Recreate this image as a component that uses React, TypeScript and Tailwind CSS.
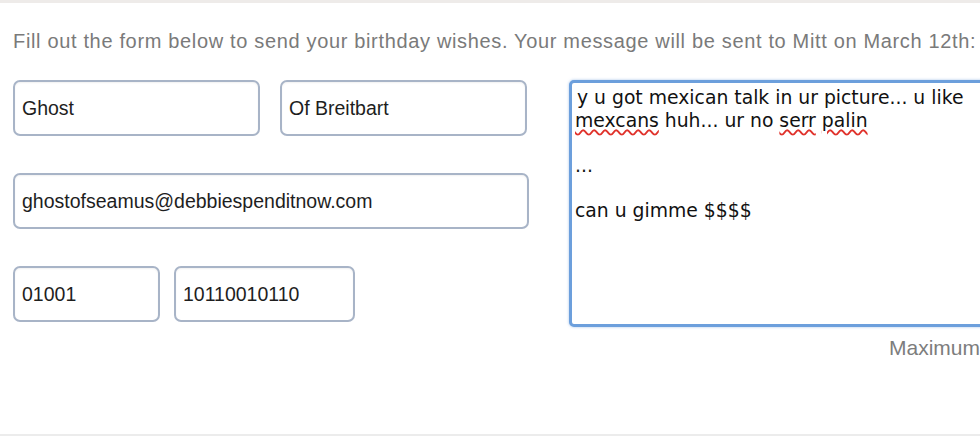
const field =
  'h-[56px] rounded-[7px] border-2 border-[#a8b4c7] bg-white px-[7px] text-[19.5px] text-[#1e1e1e] outline-none shadow-[inset_0_1px_2px_rgba(0,0,0,0.06)]';

function Misspelled({ children }: { children: string }) {
  return (
    <span className="underline decoration-wavy decoration-[#e0322b] decoration-[1.5px] underline-offset-[2px]">
      {children}
    </span>
  );
}

export default function App() {
  return (
    <div
      className="relative flex h-[438px] w-[980px] flex-col overflow-hidden bg-white"
      style={{ fontFamily: '"Liberation Sans", Arial, sans-serif' }}
    >
      <div className="h-[3px] w-full bg-[#eeebe9]" />

      <p className="ml-[13px] mt-[27px] w-[965px] whitespace-nowrap text-[20px] leading-[22px] tracking-[0.66px] text-[#7a7a7a]">
        Fill out the form below to send your birthday wishes. Your message will be sent to Mitt on March 12th:
      </p>

      <div className="mt-[28px] flex">
        {/* Left column */}
        <div className="ml-[13px] flex w-[516px] flex-col gap-[37px]">
          <div className="flex gap-[20px]">
            <input readOnly defaultValue="Ghost" className={`${field} w-[247px]`} />
            <input readOnly defaultValue="Of Breitbart" className={`${field} w-[247px]`} />
          </div>
          <input
            readOnly
            defaultValue="ghostofseamus@debbiespenditnow.com"
            className={`${field} w-[516px]`}
          />
          <div className="flex gap-[14px]">
            <input readOnly defaultValue="01001" className={`${field} w-[147px]`} />
            <input readOnly defaultValue="10110010110" className={`${field} w-[181px]`} />
          </div>
        </div>

        {/* Message */}
        <div className="ml-[40px] flex shrink-0 flex-col">
          <div
            className="h-[247px] w-[440px] rounded-[5px] border-[3px] border-[#6c9fdc] bg-white px-[3px] pt-[4px] text-[18.8px] leading-[22.6px] text-[#111] shadow-[0_0_3px_rgba(108,159,220,0.6)]"
            style={{ fontFamily: '"DejaVu Sans", Verdana, sans-serif' }}
          >
            <div className="pl-[2px]">y u got mexican talk in ur picture... u like</div>
            <div>
              <Misspelled>mexcans</Misspelled> huh... ur no <Misspelled>serr</Misspelled>{' '}
              <Misspelled>palin</Misspelled>
            </div>
            <div>&nbsp;</div>
            <div>...</div>
            <div>&nbsp;</div>
            <div>can u gimme $$$$</div>
          </div>
          <p className="ml-[320px] mt-[10px] whitespace-nowrap text-[21px] leading-[22px] text-[#7d7d7d]">
            Maximum
          </p>
        </div>
      </div>

      <div className="absolute bottom-[2px] left-0 h-[2px] w-full bg-[#ececec]" />
    </div>
  );
}
